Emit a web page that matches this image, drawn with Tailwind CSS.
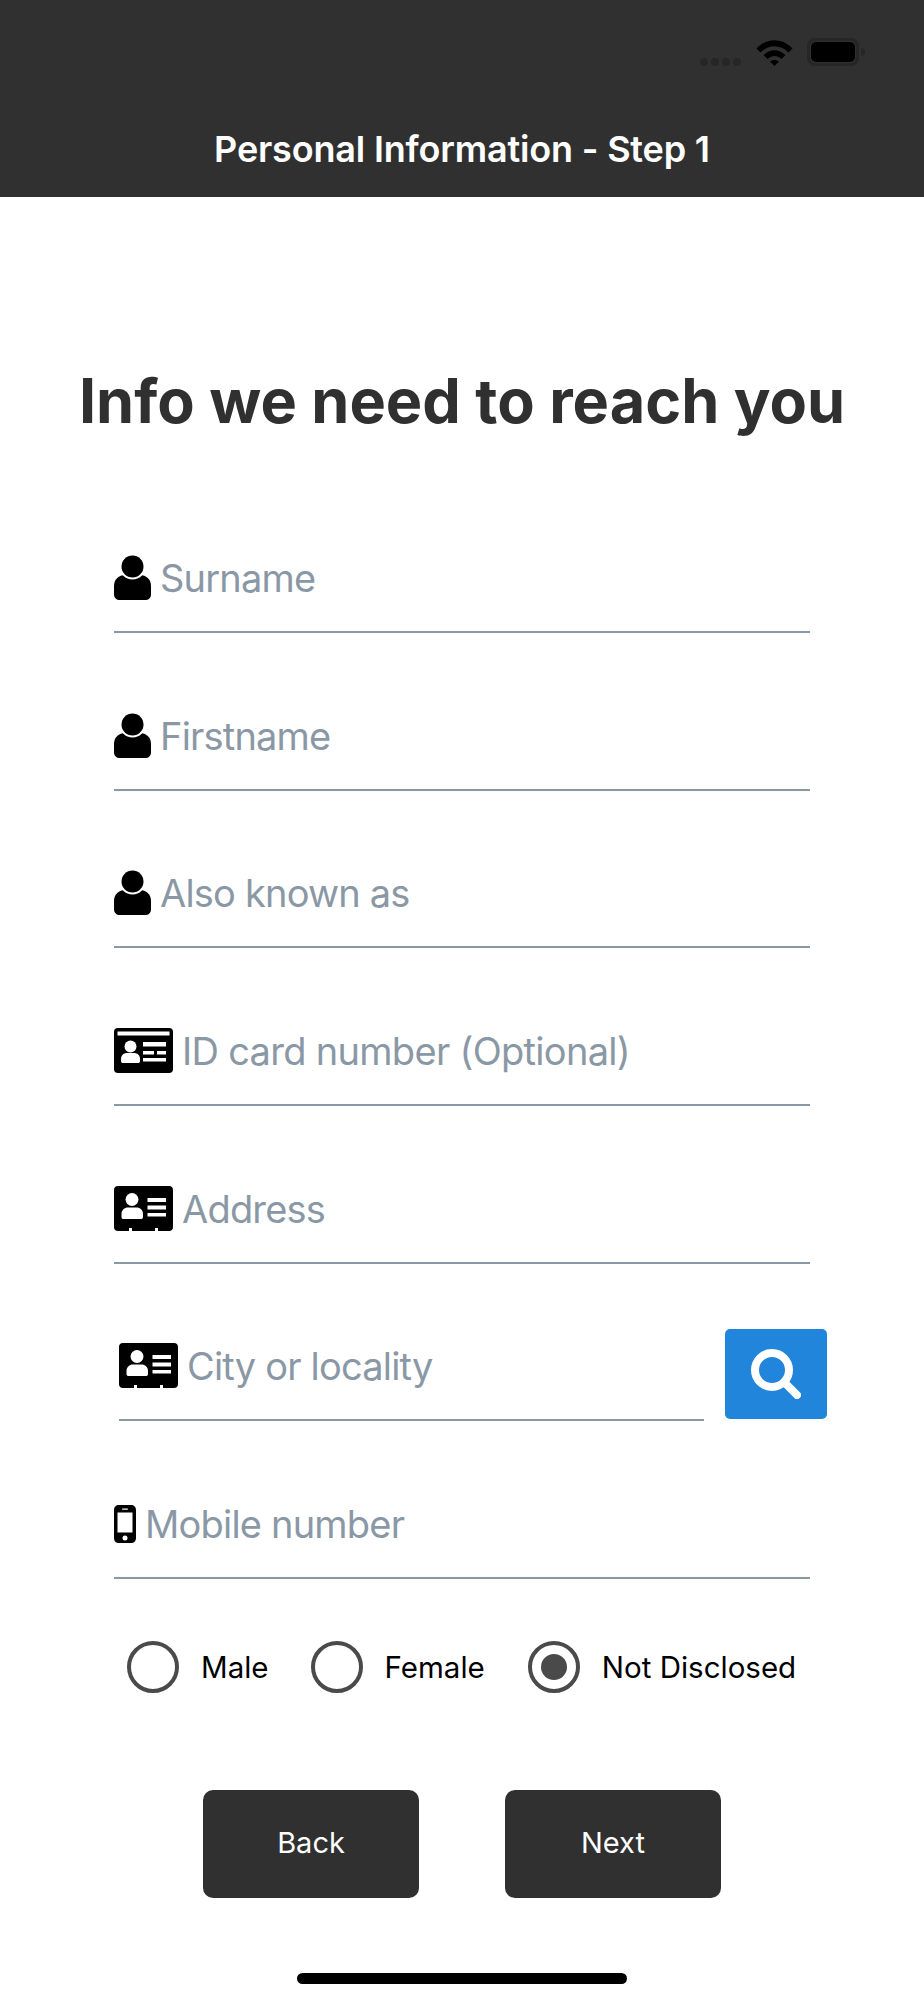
<!DOCTYPE html>
<html lang="en">
<head>
    <meta charset="UTF-8">
    <meta name="viewport" content="width=device-width, initial-scale=1.0">
    <title>Personal Information - Step 1</title>
    <script src="https://cdn.jsdelivr.net/npm/@tailwindcss/browser@4"></script>
</head>
<body class="bg-white font-['Inter',sans-serif]">
    <div class="w-[924px] h-[2000px] flex flex-col overflow-hidden relative">
        <!-- header -->
        <header class="bg-[#303030] h-[197px] relative shrink-0">
            <div class="absolute left-[700px] top-[38px] flex items-start">
                <div class="flex gap-[3px] mt-[20px]">
                    <span class="w-[8px] h-[8px] rounded-full bg-[#262626]"></span>
                    <span class="w-[8px] h-[8px] rounded-full bg-[#262626]"></span>
                    <span class="w-[8px] h-[8px] rounded-full bg-[#262626]"></span>
                    <span class="w-[8px] h-[8px] rounded-full bg-[#262626]"></span>
                </div>
                <svg class="ml-[15px] mt-[1px]" width="37" height="28" viewBox="0 0 37 28">
                    <path d="M0.5 9.5C10.5 -1.5 26.5 -1.5 36.5 9.5L32.5 13.5C24.5 5 12.5 5 4.500 13.5Z" fill="#000"/>
                    <path d="M7.5 16C14 9.5 23 9.5 29.5 16L25.5 20C21 16 16 16 11.5 20Z" fill="#000"/>
                    <path d="M14 22.5C16.5 20.5 20.5 20.5 23 22.5L18.500 27Z" fill="#000"/>
                </svg>
                <div class="ml-[14px] w-[52px] h-[28px] rounded-[8px] border-[3px] border-[#262626] p-[1px]">
                    <div class="w-full h-full rounded-[5px] bg-black"></div>
                </div>
                <div class="w-[4px] h-[8px] mt-[10px] ml-[2px] rounded-r-full bg-[#262626]"></div>
            </div>
            <h1 class="absolute inset-x-0 top-[127px] text-center text-white text-[36px] leading-[44px] font-semibold tracking-[-0.18px]">Personal Information - Step 1</h1>
        </header>

        <main class="flex-1 flex flex-col">
            <h2 class="mt-[162px] text-center text-[#303030] text-[61.2px] leading-[84px] font-bold">Info we need to reach you</h2>

            <div class="flex flex-col gap-[49.67px] mt-[82px] pl-[114px]">
                <div class="w-[696px] h-[108px] border-b-2 border-[#8a98a6] flex items-center">
                    <svg class="shrink-0" width="37" height="46" viewBox="0 0 37 46"><path d="M0 31C0 24 5 20 11 20H26C32 20 37 24 37 31V39C37 43 34.500 45 31 45H6C2.500 45 0 43 0 39Z"/><circle cx="18.500" cy="11.500" r="13" fill="#fff"/><circle cx="18.500" cy="11.500" r="11"/></svg>
                    <span class="ml-[9px] mt-[1px] text-[38px] tracking-[-0.8px] text-[#8a98a6]">Surname</span>
                </div>
                <div class="w-[696px] h-[108px] border-b-2 border-[#8a98a6] flex items-center">
                    <svg class="shrink-0" width="37" height="46" viewBox="0 0 37 46"><path d="M0 31C0 24 5 20 11 20H26C32 20 37 24 37 31V39C37 43 34.500 45 31 45H6C2.500 45 0 43 0 39Z"/><circle cx="18.500" cy="11.500" r="13" fill="#fff"/><circle cx="18.500" cy="11.500" r="11"/></svg>
                    <span class="ml-[9px] mt-[1px] text-[38px] tracking-[-0.8px] text-[#8a98a6]">Firstname</span>
                </div>
                <div class="w-[696px] h-[108px] border-b-2 border-[#8a98a6] flex items-center">
                    <svg class="shrink-0" width="37" height="46" viewBox="0 0 37 46"><path d="M0 31C0 24 5 20 11 20H26C32 20 37 24 37 31V39C37 43 34.500 45 31 45H6C2.500 45 0 43 0 39Z"/><circle cx="18.500" cy="11.500" r="13" fill="#fff"/><circle cx="18.500" cy="11.500" r="11"/></svg>
                    <span class="ml-[9px] mt-[1px] text-[38px] tracking-[-0.8px] text-[#8a98a6]">Also known as</span>
                </div>
                <div class="w-[696px] h-[108px] border-b-2 border-[#8a98a6] flex items-center">
                    <svg class="shrink-0" width="60" height="46" viewBox="0 0 60 46"><rect width="59" height="45" rx="4"/><rect x="3.500" y="3.500" width="52" height="4" fill="#fff"/><circle cx="16.500" cy="18.500" r="6" fill="#fff"/><path d="M7 31C7 27 10 25 13 25H20C23 25 26 27 26 31V33C26 34.500 25 35 24 35H9C8 35 7 34.500 7 33Z" fill="#fff"/><path d="M29 14H52V18.500H29ZM29 23H40V26.500H29ZM43 23H52V26.500H43ZM29 30H52V33.500H29Z" fill="#fff"/></svg>
                    <span class="ml-[8px] mt-[1px] text-[38px] tracking-[-0.7px] text-[#8a98a6]">ID card number (Optional)</span>
                </div>
                <div class="w-[696px] h-[108px] border-b-2 border-[#8a98a6] flex items-center">
                    <svg class="shrink-0" width="60" height="46" viewBox="0 0 60 46"><path d="M4 0H55C57.500 0 59 1.500 59 4V41C59 43.500 57.500 45 55 45H44V42H41V45H18V42H15V45H4C1.500 45 0 43.500 0 41V4C0 1.500 1.500 0 4 0Z"/><circle cx="18" cy="13.500" r="6.500" fill="#fff"/><path d="M7.500 28C7.500 24 10.500 21.500 14 21.500H22.500C26 21.500 29 24 29 28V31C29 32.500 28 33 27 33H9.500C8.500 33 7.500 32.500 7.500 31Z" fill="#fff"/><path d="M33.500 12H52V16H33.500ZM33.500 19.500H52V23.500H33.500ZM33.500 27H52V30.500H33.500Z" fill="#fff"/></svg>
                    <span class="ml-[8px] mt-[1px] text-[38px] tracking-[-0.8px] text-[#8a98a6]">Address</span>
                </div>
                <div class="flex items-end w-[713px] h-[108px] pl-[5px]">
                    <div class="w-[585px] h-[108px] border-b-2 border-[#8a98a6] flex items-center">
                        <svg class="shrink-0" width="60" height="46" viewBox="0 0 60 46"><path d="M4 0H55C57.500 0 59 1.500 59 4V41C59 43.500 57.500 45 55 45H44V42H41V45H18V42H15V45H4C1.500 45 0 43.500 0 41V4C0 1.500 1.500 0 4 0Z"/><circle cx="18" cy="13.500" r="6.500" fill="#fff"/><path d="M7.500 28C7.500 24 10.500 21.500 14 21.500H22.500C26 21.500 29 24 29 28V31C29 32.500 28 33 27 33H9.500C8.500 33 7.500 32.500 7.500 31Z" fill="#fff"/><path d="M33.500 12H52V16H33.500ZM33.500 19.500H52V23.500H33.500ZM33.500 27H52V30.500H33.500Z" fill="#fff"/></svg>
                        <span class="ml-[8px] mt-[1px] text-[38px] tracking-[-0.8px] text-[#8a98a6]">City or locality</span>
                    </div>
                    <button class="ml-[21px] mb-[2px] w-[102px] h-[90px] shrink-0 rounded-[5px] bg-[#2185dc] flex items-center justify-center">
                        <svg width="50" height="50" viewBox="0 0 50 50" fill="none" stroke="#fff"><circle cx="21" cy="21" r="17" stroke-width="8"/><path d="M33 33L46 46" stroke-width="8" stroke-linecap="round"/></svg>
                    </button>
                </div>
                <div class="w-[696px] h-[108px] border-b-2 border-[#8a98a6] flex items-center">
                    <svg class="shrink-0" width="22" height="38" viewBox="0 0 22 38"><path fill-rule="evenodd" d="M5 0H17C20 0 22 2 22 5V33C22 36 20 38 17 38H5C2 38 0 36 0 33V5C0 2 2 0 5 0ZM3.500 7.500V27.500H18.500V7.500Z"/><rect x="8" y="3.500" width="6" height="1.200" rx="0.600" fill="#fff"/><circle cx="11" cy="33" r="2.500" fill="#fff"/></svg>
                    <span class="ml-[9px] mt-[1px] text-[38px] tracking-[-0.8px] text-[#8a98a6]">Mobile number</span>
                </div>
            </div>

            <div class="flex items-center mt-[62px] pl-[127px] h-[52px] text-[29.5px] text-black">
                <span class="w-[52px] h-[52px] rounded-full border-[4px] border-[#4a4a4a] shrink-0"></span>
                <span class="ml-[22px]">Male</span>
                <span class="ml-[42px] w-[52px] h-[52px] rounded-full border-[4px] border-[#4a4a4a] shrink-0"></span>
                <span class="ml-[22px]">Female</span>
                <span class="ml-[43px] w-[52px] h-[52px] rounded-full border-[4px] border-[#4a4a4a] shrink-0 flex items-center justify-center"><span class="w-[26px] h-[26px] rounded-full bg-[#4a4a4a]"></span></span>
                <span class="ml-[22px]">Not Disclosed</span>
            </div>

            <div class="flex justify-center gap-[86px] mt-[97px]">
                <button class="w-[216px] h-[108px] pb-[2px] rounded-[10px] bg-[#303030] text-white text-[29px]">Back</button>
                <button class="w-[216px] h-[108px] pb-[2px] rounded-[10px] bg-[#303030] text-white text-[29px]">Next</button>
            </div>
        </main>

        <div class="absolute left-[297px] top-[1973px] w-[330px] h-[11px] rounded-full bg-black"></div>
    </div>
</body>
</html>
